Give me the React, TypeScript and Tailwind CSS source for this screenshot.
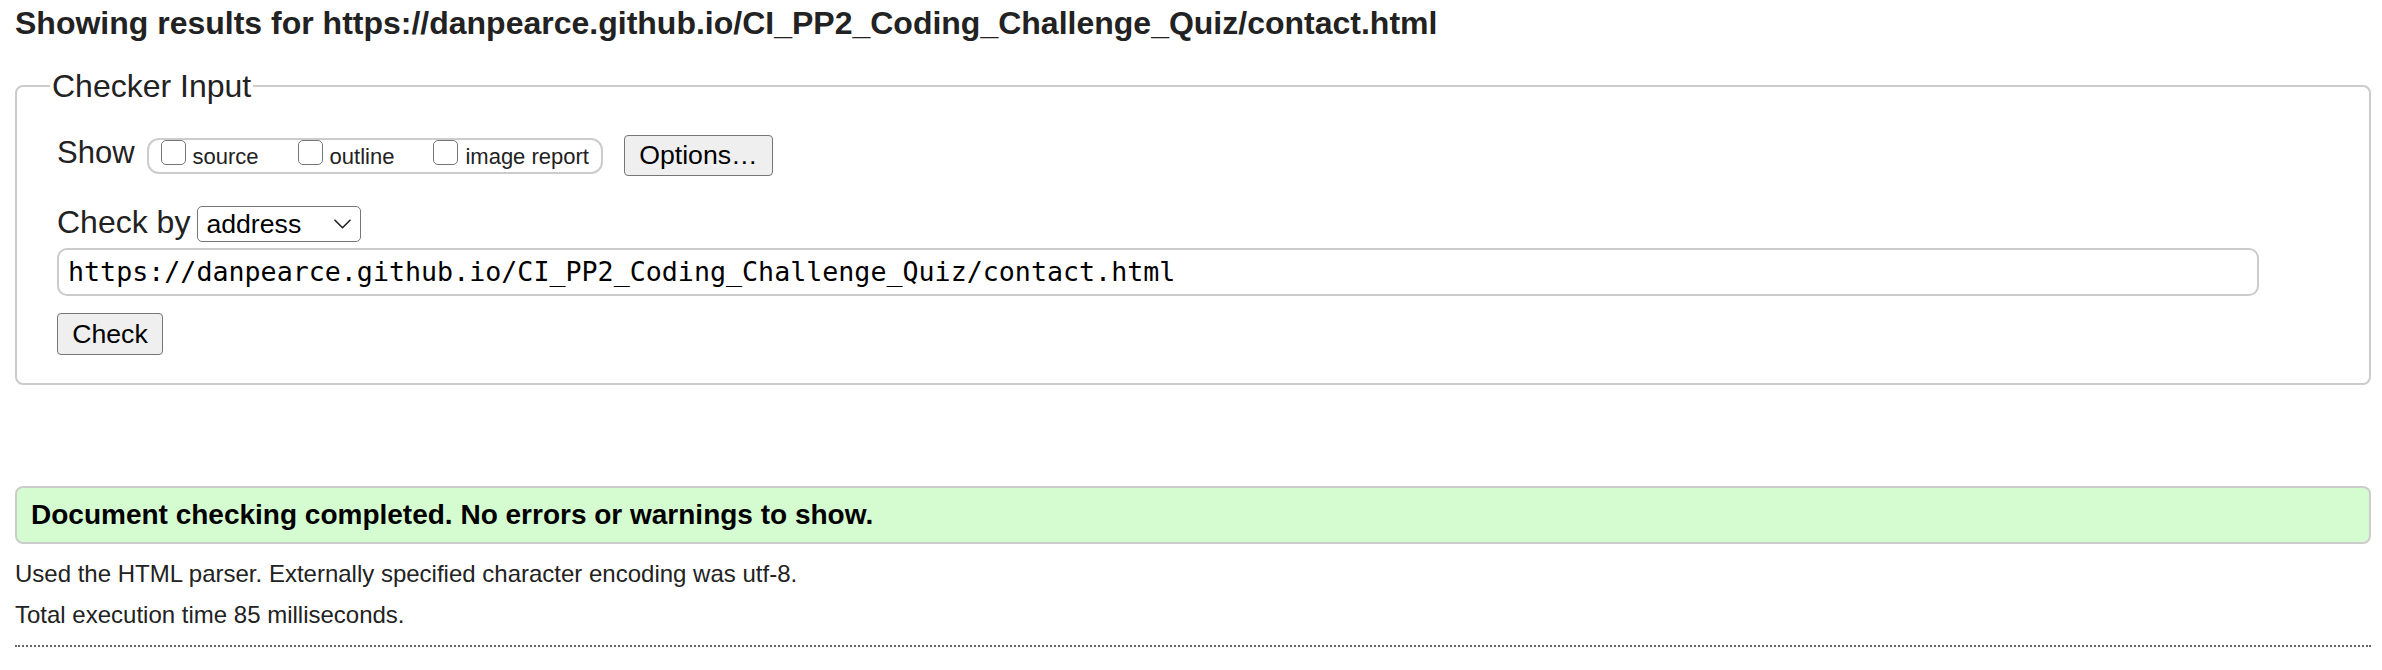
import React from "react";

function CheckItem({ label }: { label: string }) {
  return (
    <div className="flex items-start">
      <span className="block h-[25px] w-[25px] rounded-[5px] border-[1.5px] border-[#767676] bg-white" />
      <span className="ml-[7px] mt-px text-[22px] leading-[32px] text-[#222]">{label}</span>
    </div>
  );
}

export default function App() {
  return (
    <div className="min-h-[670px] bg-white pl-[15px] pr-[11px] font-['Liberation_Sans',Arial,sans-serif] text-[#222]">
      <h2 className="pt-[5px] text-[32px] font-bold leading-[37px]">
        Showing results for https://danpearce.github.io/CI_PP2_Coding_Challenge_Quiz/contact.html
      </h2>

      <fieldset className="mt-[26px] rounded-[8px] border-2 border-[#cccccc] pb-[28px] pl-[31px]">
        <legend className="ml-[2px] px-[2px] text-[32px] leading-[36px]">Checker Input</legend>
        <div className="pl-[9px]">
          <div className="mt-[31px] flex h-[41px] items-center">
            <span className="mb-[6px] text-[31px] leading-[36px]">Show</span>
            <div className="ml-[12px] flex h-[36px] items-start gap-[39px] rounded-[12px] border-2 border-[#cccccc] pl-[12px] pr-[12px]">
              <CheckItem label="source" />
              <CheckItem label="outline" />
              <CheckItem label="image report" />
            </div>
            <button className="ml-[21px] h-[41px] w-[149px] rounded-[4px] border-[1.5px] border-[#767676] bg-[#efefef] text-[26.67px] leading-none text-black">
              Options…
            </button>
          </div>

          <div className="mt-[30px] flex h-[36px] items-center">
            <span className="mb-[4px] text-[32px] leading-[36px]">Check by</span>
            <div className="ml-[7px] flex h-[36px] w-[164px] items-center justify-between rounded-[5px] border-[1.5px] border-[#767676] bg-white pl-[8px] pr-[9px] text-[26.67px] leading-none text-black">
              <span>address</span>
              <svg width="17" height="10" viewBox="0 0 17 10" fill="none">
                <path d="M1 1.2 L8.5 8.8 L16 1.2" stroke="#222" strokeWidth="1.6" strokeLinecap="round" strokeLinejoin="round" />
              </svg>
            </div>
          </div>

          <div className="mt-[6px] flex h-[48px] w-[2202px] items-center rounded-[10px] border-2 border-[#cccccc] bg-white pl-[9px] font-['DejaVu_Sans_Mono',monospace] text-[26.67px] text-black">
            https://danpearce.github.io/CI_PP2_Coding_Challenge_Quiz/contact.html
          </div>

          <button className="mt-[17px] block h-[42px] w-[106px] rounded-[4px] border-[1.5px] border-[#767676] bg-[#efefef] text-[26.67px] leading-none text-black">
            Check
          </button>
        </div>
      </fieldset>

      <div className="mt-[101px] flex h-[58px] items-center rounded-[8px] border-2 border-[#cccccc] bg-[#d5fbd1] pl-[14px] text-[28px] font-bold text-black">
        Document checking completed. No errors or warnings to show.
      </div>

      <p className="mt-[16px] text-[24px] leading-[28px]">
        Used the HTML parser. Externally specified character encoding was utf-8.
      </p>
      <p className="mt-[13px] text-[24px] leading-[28px]">Total execution time 85 milliseconds.</p>
      <div className="mt-[16px] border-t-2 border-dotted border-[#666]" />
    </div>
  );
}
